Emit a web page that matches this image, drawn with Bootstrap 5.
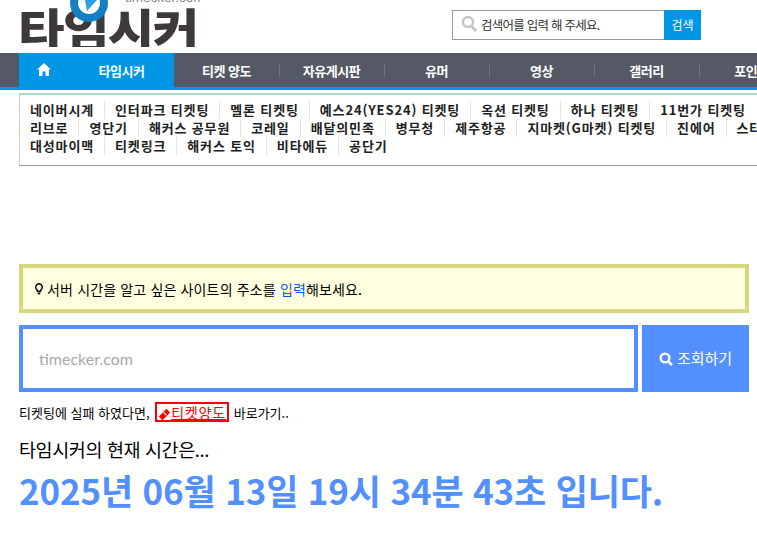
<!DOCTYPE html>
<html lang="ko">
<head>
  <meta charset="UTF-8">
  <title>타임시커</title>
  <meta name="viewport" content="width=device-width, initial-scale=1">
  <link href="https://cdn.jsdelivr.net/npm/bootstrap@5.3.3/dist/css/bootstrap.min.css" rel="stylesheet">
  <style>
    html, body { overflow: hidden; }
    body { font-family: "Noto Sans CJK KR", "Noto Sans", sans-serif; color: #000; font-size: 13px; background: #fff; }
    .top-head { height: 53px; padding-left: 19px; }
    .logo-box { width: 181px; height: 47px; position: relative; overflow: hidden; flex: none; }
    .logo-txt { position: absolute; left: -1px; bottom: -3px; font-size: 46px; font-weight: 900; line-height: 1; letter-spacing: -1.5px; color: #3f3a3a; white-space: nowrap; transform: scaleX(1.1); transform-origin: left bottom; }
    .logo-url { position: absolute; left: 106px; top: -9px; font: 13.5px/1 "Liberation Sans", sans-serif; color: #8a8a8a; }
    .logo-mark { position: absolute; left: 51px; top: -16px; width: 38px; height: 38px; }
    .head-search { width: 249px; height: 30px; margin: 10px 0 0 252px; flex: none; border: 1px solid #999; }
    .head-search-txt { font-size: 12.5px; color: #333; letter-spacing: -.75px; line-height: 28px; margin-left: 3px; }
    .head-search-btn { width: 37px; height: 30px; margin: -1px -1px 0 0; background: #0096e6; color: #fff; font-size: 12px; line-height: 30px; text-align: center; }
    .main-nav { height: 37px; background: #555965; border-bottom: 3px solid #0096e6; padding-left: 19px; white-space: nowrap; }
    .main-nav a { color: #fff; font-weight: 700; font-size: 13px; text-decoration: none; line-height: 36px; height: 34px; text-align: center; flex: none; width: 105px; position: relative; letter-spacing: -.5px; }
    .main-nav a + a::before { content: ""; position: absolute; left: 0; top: 12px; height: 12px; width: 1px; background: #737783; }
    .main-nav .nav-home { width: 50px; background: #0096e6; padding-top: 10px; padding-left: 18px; text-align: left; }
    .main-nav .nav-on { width: 105px; background: #0096e6; padding-left: 0; text-align: center; }
    .main-nav .nav-home + .nav-on::before, .main-nav .nav-on + a::before { display: none; }
    .site-box { width: 900px; margin: 3px 0 0 19px; height: 73px; border: 1px solid #ccc; border-top-width: 2px; border-bottom: 1px solid #999; padding: 5px 0 0 1px; }
    .site-row { height: 18px; white-space: nowrap; }
    .site-row a { display: inline-block; color: #222; font-weight: 700; font-size: 13px; line-height: 18px; text-decoration: none; padding: 0 10px; border-left: 1px solid #e4e4e4; letter-spacing: .85px; }
    .site-row a:first-child { border-left: 0; padding-left: 9px; }
    .page-body { width: 730px; margin: 98px 0 0 19px; }
    .tip-box { height: 49px; border: 4px solid #d8d780; background: #ffffdf; padding-left: 12px; font-size: 14px; line-height: 42px; letter-spacing: .15px; }
    .tip-box b { color: #0a5ae6; font-weight: 400; }
    .look-row { margin-top: 12px; height: 67px; gap: 4px; }
    .look-input { flex: 1; border: 4px solid #5390ff; padding-left: 16px; font: 16px/59px Lato, sans-serif; color: #a8a8a8; }
    .look-btn { width: 107px; background: #5390ff; color: #fff; font-size: 15px; }
    .fail-line { margin-top: 10px; height: 22px; line-height: 22px; font-size: 13px; }
    .fail-tag { display: inline-block; border: 2px solid #f00; height: 20px; line-height: 16px; padding: 0 1px; margin: 0 1px 0 2px; color: #f00; font-size: 14px; text-decoration: underline; letter-spacing: .85px; }
    .now-line { font-size: 18.5px; line-height: 26px; margin-top: 12px; letter-spacing: -.4px; }
    .now-time { color: #5390ff; font-size: 35px; font-weight: 700; line-height: 50px; margin-top: 3px; white-space: nowrap; letter-spacing: -.17px; }
  </style>
</head>
<body>

  <div class="top-head d-flex">
    <div class="logo-box">
      <span class="logo-txt">타임시커</span>
      <span class="logo-url">timecker.com</span>
      <svg class="logo-mark" viewBox="0 0 38 38">
        <circle cx="19" cy="19" r="19" fill="#1480c4"/>
        <circle cx="19" cy="19" r="11" fill="#fff"/>
        <path d="M14 10 L27 16 L17 27 Z" fill="#2aa0e0"/>
      </svg>
    </div>
    <div class="head-search d-flex align-items-start">
      <svg class="ms-2 mt-1 flex-none" width="17" height="18" viewBox="0 0 17 18">
        <circle cx="7" cy="7" r="5" fill="none" stroke="#c4c4c4" stroke-width="2.4"/>
        <path d="M10.5 11 L15 16" stroke="#c4c4c4" stroke-width="3"/>
      </svg>
      <span class="head-search-txt flex-grow-1">검색어를 입력 해 주세요.</span>
      <span class="head-search-btn">검색</span>
    </div>
  </div>

  <nav class="main-nav d-flex">
    <a class="nav-home" href="#">
      <svg width="14" height="13" viewBox="0 0 14 13" class="d-block">
        <path d="M7 0 L14 6.5 L12 6.5 L12 13 L8.5 13 L8.5 8.5 L5.5 8.5 L5.5 13 L2 13 L2 6.5 L0 6.5 Z" fill="#fff"/>
      </svg>
    </a>
    <a class="nav-on" href="#">타임시커</a>
    <a href="#">티켓 양도</a>
    <a href="#">자유게시판</a>
    <a href="#">유머</a>
    <a href="#">영상</a>
    <a href="#">갤러리</a>
    <a href="#">포인트</a>
  </nav>

  <div class="site-box">
    <div class="site-row"><a href="#">네이버시계</a><a href="#">인터파크 티켓팅</a><a href="#">멜론 티켓팅</a><a href="#">예스24(YES24) 티켓팅</a><a href="#">옥션 티켓팅</a><a href="#">하나 티켓팅</a><a href="#">11번가 티켓팅</a></div>
    <div class="site-row"><a href="#">리브로</a><a href="#">영단기</a><a href="#">해커스 공무원</a><a href="#">코레일</a><a href="#">배달의민족</a><a href="#">병무청</a><a href="#">제주항공</a><a href="#">지마켓(G마켓) 티켓팅</a><a href="#">진에어</a><a href="#">스타벅스</a></div>
    <div class="site-row"><a href="#">대성마이맥</a><a href="#">티켓링크</a><a href="#">해커스 토익</a><a href="#">비타에듀</a><a href="#">공단기</a></div>
  </div>

  <div class="page-body">
    <div class="tip-box d-flex align-items-center">
      <svg class="me-1 flex-shrink-0" width="8" height="12" viewBox="0 0 8 12">
        <path d="M4 .7 A3.3 3.3 0 0 1 6 6.6 L5.6 8.3 L2.4 8.3 L2 6.6 A3.3 3.3 0 0 1 4 .7 Z" fill="none" stroke="#000" stroke-width="1.4"/>
        <path d="M2.6 9.4 H5.4 V10.6 L4.6 11.6 H3.4 L2.6 10.6 Z" fill="#000"/>
      </svg>
      <span>서버 시간을 알고 싶은 사이트의 주소를 <b>입력</b>해보세요.</span>
    </div>

    <div class="look-row d-flex">
      <div class="look-input">timecker.com</div>
      <div class="look-btn d-flex align-items-center justify-content-center gap-1">
        <svg width="14" height="14" viewBox="0 0 14 14">
          <circle cx="6" cy="6" r="4.4" fill="none" stroke="#fff" stroke-width="2.4"/>
          <path d="M9.4 9.4 L13 13" stroke="#fff" stroke-width="2.6"/>
        </svg>
        <span>조회하기</span>
      </div>
    </div>

    <div class="fail-line">티켓팅에 실패 하였다면, <span class="fail-tag"><svg width="13" height="13" viewBox="0 0 13 13"><path d="M8.5 .8 L12.2 4.5 L4.5 12.2 L.8 8.5 Z" fill="#f00"/><path d="M5.6 4.4 L8.6 7.4" stroke="#fff" stroke-width="1.1"/></svg>티켓양도</span> 바로가기..</div>
    <div class="now-line">타임시커의 현재 시간은...</div>
    <div class="now-time">2025년 06월 13일 19시 34분 43초 입니다.</div>
  </div>

</body>
</html>
